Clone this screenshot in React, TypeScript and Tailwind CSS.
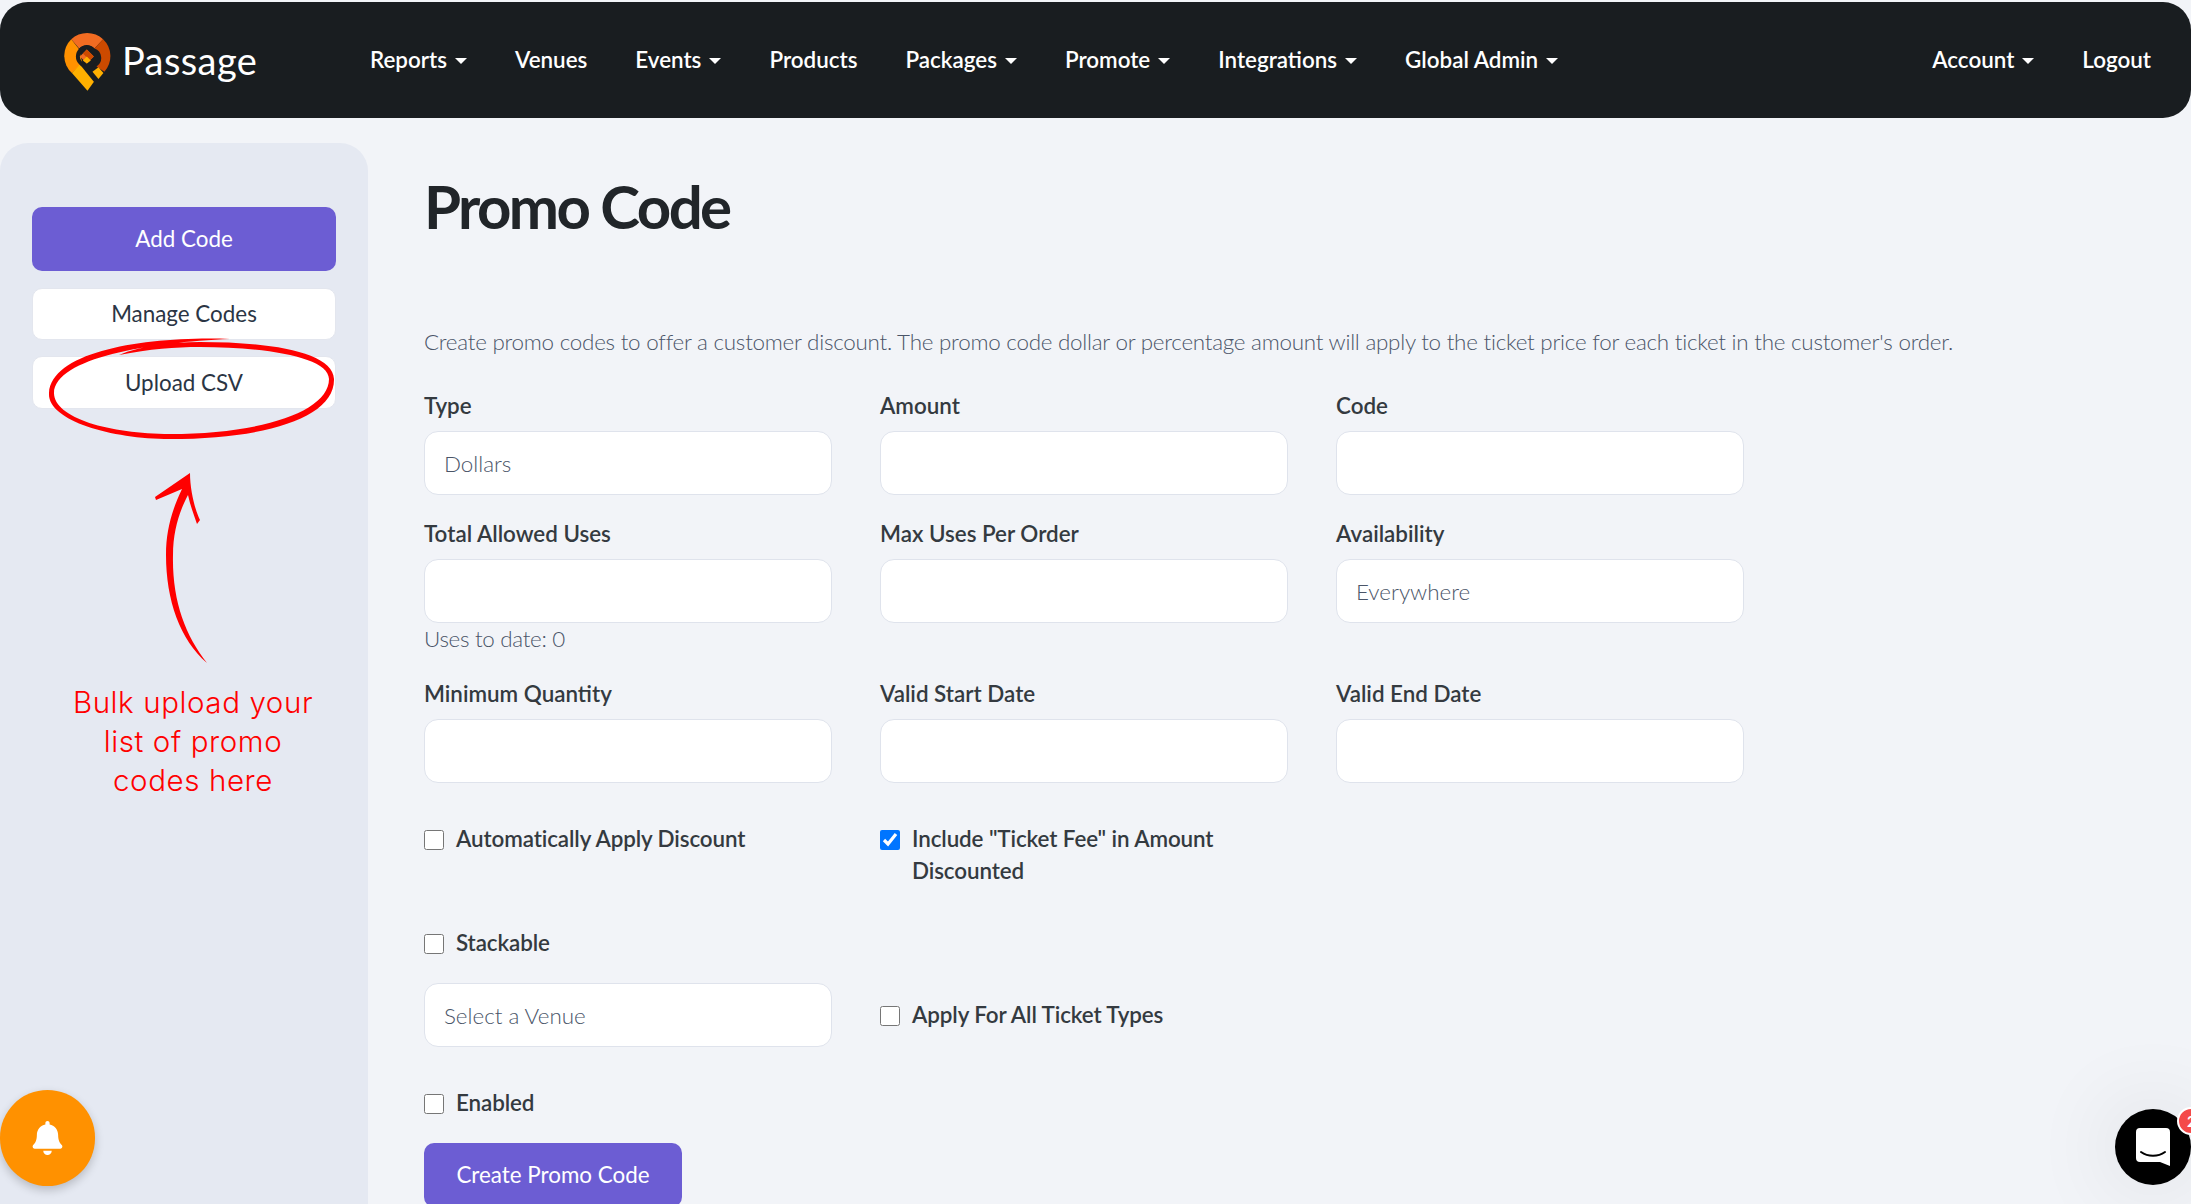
import { FaBell } from 'react-icons/fa';

const navLeft = [
  { name: 'Reports', caret: true },
  { name: 'Venues' },
  { name: 'Events', caret: true },
  { name: 'Products' },
  { name: 'Packages', caret: true },
  { name: 'Promote', caret: true },
  { name: 'Integrations', caret: true },
  { name: 'Global Admin', caret: true },
];

function NavItem({ name, caret }: { name: string; caret?: boolean }) {
  return (
    <a className="flex items-center whitespace-nowrap text-white font-semibold">
      {name}
      {caret && <span className="ml-[8px] mt-[2px] w-0 h-0 border-x-[6px] border-x-transparent border-t-[6px] border-t-white" />}
    </a>
  );
}

function Logo() {
  return (
    <svg viewBox="60 60 170 190" className="w-[57px] h-[63px] mt-[2px]">
      <path d="M96 88 A70 70 0 0 1 192 88 L166 116 A30 30 0 0 0 120 116 Z" fill="#f26c22" />
      <path d="M192 88 A70 70 0 0 1 196 186 L172 170 A30 30 0 0 0 166 116 Z" fill="#cc4a00" />
      <path d="M96 88 A70 70 0 0 0 98 190 L130 160 L118 116 Z" fill="#ff9100" />
      <path d="M98 190 L145 243 L166 214 L124 162 Z" fill="#ffb000" />
      <path d="M160 186 L178 208 L193 190 L178 172 Z" fill="#ffb000" />
      <circle cx="143" cy="140" r="27" fill="none" stroke="#191d20" strokeWidth="12" />
      <path d="M128 162 L170 214" stroke="#191d20" strokeWidth="12" />
      <path d="M143 119 L164 140 L143 161 L122 140 Z" fill="#f26c22" />
      <path d="M143 119 L164 140 L152 152 L131 131 Z" fill="#cc4a00" />
      <path d="M131 152 L143 140 L155 152 L143 161 Z" fill="#ffb000" />
    </svg>
  );
}

function Field({ label, value, help }: { label: string; value?: string; help?: string }) {
  return (
    <div>
      <label className="block h-8 leading-8 mb-[9px] font-semibold text-[#343a40]">{label}</label>
      <input
        readOnly
        defaultValue={value}
        className="block w-full h-16 px-[19px] bg-white border border-[#dfe3ec] rounded-[14px] font-light text-[#4a5568] outline-none"
      />
      {help && <div className="h-8 leading-8 font-light text-[#4a5568] tracking-[-0.3px]">{help}</div>}
    </div>
  );
}

function Check({ label, checked }: { label: string; checked?: boolean }) {
  return (
    <label className="flex items-start gap-3 leading-8 font-semibold text-[#343a40] tracking-[-0.1px]">
      <input type="checkbox" defaultChecked={checked} className="w-5 h-5 mt-[7px] m-0 shrink-0" />
      <span>{label}</span>
    </label>
  );
}

export default function App() {
  return (
    <div className="relative h-[1204px] w-[2191px] overflow-hidden bg-[#f2f4f8] text-[22.4px] font-['Lato',sans-serif]">
      <div className="pt-[2px]">
        <nav className="flex items-center h-[116px] bg-[#191d20] rounded-[28px] pl-[59px] pr-[40px]">
          <div className="flex items-center w-[311px] gap-[6px]">
            <Logo />
            <span className="text-white text-[38px] tracking-[0.4px] leading-none">Passage</span>
          </div>
          <div className="flex gap-12">
            {navLeft.map((n) => <NavItem key={n.name} {...n} />)}
          </div>
          <div className="flex gap-12 ml-auto">
            <NavItem name="Account" caret />
            <NavItem name="Logout" />
          </div>
        </nav>
      </div>

      <div className="flex mt-[25px]">
        <aside className="w-[368px] h-[1100px] shrink-0 bg-[#e5e9f2] rounded-t-[28px] px-8 pt-16 flex flex-col gap-4 text-center">
          <button className="h-16 bg-[#6c5dd3] text-white rounded-[10px] mb-[1px]">Add Code</button>
          <button className="h-[52px] bg-white border border-[#e3e6ee] rounded-[10px] text-[#2b3544]">Manage Codes</button>
          <button className="h-[53px] bg-white border border-[#e3e6ee] rounded-[10px] text-[#2b3544]">Upload CSV</button>
          <div className="mt-[258px] ml-[-4px] w-[330px] text-[#ff0000] font-['Inter',sans-serif] font-light text-[29.5px] leading-[39px] tracking-[0.6px]">
            Bulk upload your<br />list of promo<br />codes here
          </div>
        </aside>

        <main className="pl-14 flex-1">
          <h1 className="h-[106px] pt-[25px] text-[60px] leading-[76px] font-bold text-[#212529] tracking-[-2.6px]">Promo Code</h1>
          <p className="mt-[77px] h-8 leading-8 font-light text-[#4a5568] whitespace-nowrap tracking-[-0.24px]">
            Create promo codes to offer a customer discount. The promo code dollar or percentage amount will apply to the ticket price for each ticket in the customer's order.
          </p>
          <div className="mt-[32px] w-[1320px] grid grid-cols-3 gap-x-12 gap-y-[23px]">
            <Field label="Type" value="Dollars" />
            <Field label="Amount" />
            <Field label="Code" />
            <Field label="Total Allowed Uses" help="Uses to date: 0" />
            <Field label="Max Uses Per Order" />
            <Field label="Availability" value="Everywhere" />
            <Field label="Minimum Quantity" />
            <Field label="Valid Start Date" />
            <Field label="Valid End Date" />
          </div>
          <div className="mt-10 w-[1320px] grid grid-cols-3 gap-x-12">
            <Check label="Automatically Apply Discount" />
            <Check label={'Include "Ticket Fee" in Amount Discounted'} checked />
          </div>
          <div className="mt-10">
            <Check label="Stackable" />
          </div>
          <div className="mt-6 w-[1320px] grid grid-cols-3 gap-x-12 items-center">
            <input
              readOnly
              defaultValue="Select a Venue"
              className="block w-full h-16 px-[19px] bg-white border border-[#dfe3ec] rounded-[14px] font-light text-[#4a5568] outline-none"
            />
            <Check label="Apply For All Ticket Types" />
          </div>
          <div className="mt-10">
            <Check label="Enabled" />
          </div>
          <button className="mt-[24px] w-[258px] h-16 bg-[#6c5dd3] text-white rounded-[10px]">Create Promo Code</button>
        </main>
      </div>

      {/* hand drawn annotation over the sidebar */}
      <svg className="absolute left-0 top-0 w-[368px] h-[700px] pointer-events-none" viewBox="0 0 368 700">
        <path
          fill="#ff0000"
          d="M230 339 C150 336 52 350 49 393 C47 420 110 439 170 439 C265 439 335 418 334 379 C333 352 270 342 200 342 C170 342 140 346 119 355 C150 349 175 347 200 347 C265 347 329 357 329 379 C329 412 260 434 170 434 C110 434 54 418 54 393 C55 358 150 342 230 339 Z"
        />
        <path
          fill="#ff0000"
          d="M190 473 L155 497 L156 500 L182 489 C172 510 166 530 166 555 C166 600 180 640 207 663 C185 635 172 600 173 555 C173 530 180 510 188 495 C190 505 194 515 197 524 L200 520 C195 510 190 490 190 473 Z"
        />
      </svg>

      <div className="absolute left-0 top-[1090px] w-[95px] h-[96px] rounded-full bg-[#ff9100] shadow-[0_4px_10px_rgba(0,0,0,0.2)] flex items-center justify-center">
        <FaBell className="text-white w-[31px] h-[34px]" />
      </div>

      <div className="absolute left-[2115px] top-[1109px] w-[76px] h-[76px] rounded-full bg-black shadow-[0_0_90px_rgba(0,0,0,0.12)] flex items-center justify-center">
        <svg viewBox="0 0 34 38" className="w-[34px] h-[38px]">
          <path fill="#fff" d="M4 0 H30 A4 4 0 0 1 34 4 V38 L24 34 H4 A4 4 0 0 1 0 30 V4 A4 4 0 0 1 4 0 Z" />
          <path fill="none" stroke="#000" strokeWidth="2" strokeLinecap="round" d="M5 24 C12 29 22 29 29 24" />
        </svg>
      </div>
      <div className="absolute left-[2177px] top-[1107px] w-7 h-7 rounded-full bg-[#f44a4a] border-2 border-white text-white text-[15px] leading-6 font-bold pl-[8px]">2</div>
    </div>
  );
}
